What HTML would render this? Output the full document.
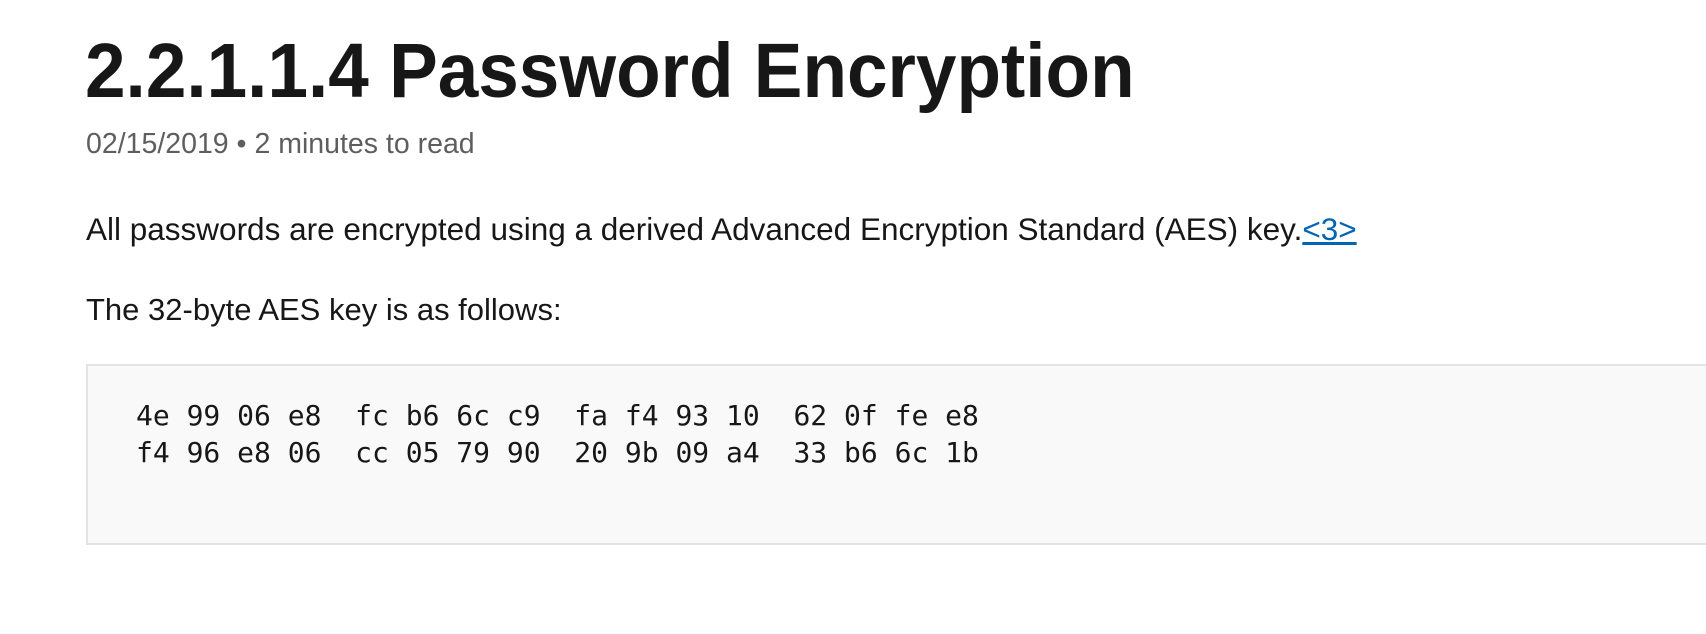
<!DOCTYPE html>
<html><head><meta charset="utf-8"><style>
html,body{margin:0;padding:0;background:#fff;width:1706px;height:634px;overflow:hidden;position:relative}
.t{position:absolute;white-space:nowrap;line-height:1;font-family:"Liberation Sans",sans-serif;color:#171717}
h1{margin:0;font-weight:bold;font-size:77px;left:85px;top:33px;transform:scaleX(.947);transform-origin:0 0}
.meta{font-size:28.5px;left:86px;top:130px;color:#5e5e5e}
.p{font-size:31px;left:86px}
a{color:#0065b3;text-decoration:underline}
.box{position:absolute;left:86px;top:364px;width:1640px;height:177px;background:#f9f9f9;border:2px solid #e3e3e3;border-right:none}
.c{position:absolute;font-family:"DejaVu Sans Mono","Liberation Mono",monospace;font-size:28px;line-height:1;white-space:pre;left:136px;color:#171717}
</style></head><body>
<h1 class="t">2.2.1.1.4 Password Encryption</h1>
<div class="t meta">02/15/2019 • 2 minutes to read</div>
<div class="t p" style="top:214px;font-size:31.5px">All passwords are encrypted using a derived Advanced Encryption Standard (AES) key.<a>&lt;3&gt;</a></div>
<div class="t p" style="top:294px">The 32-byte AES key is as follows:</div>
<div class="box"></div>
<div class="c" style="top:402px">4e 99 06 e8  fc b6 6c c9  fa f4 93 10  62 0f fe e8</div>
<div class="c" style="top:439px">f4 96 e8 06  cc 05 79 90  20 9b 09 a4  33 b6 6c 1b</div>
</body></html>
